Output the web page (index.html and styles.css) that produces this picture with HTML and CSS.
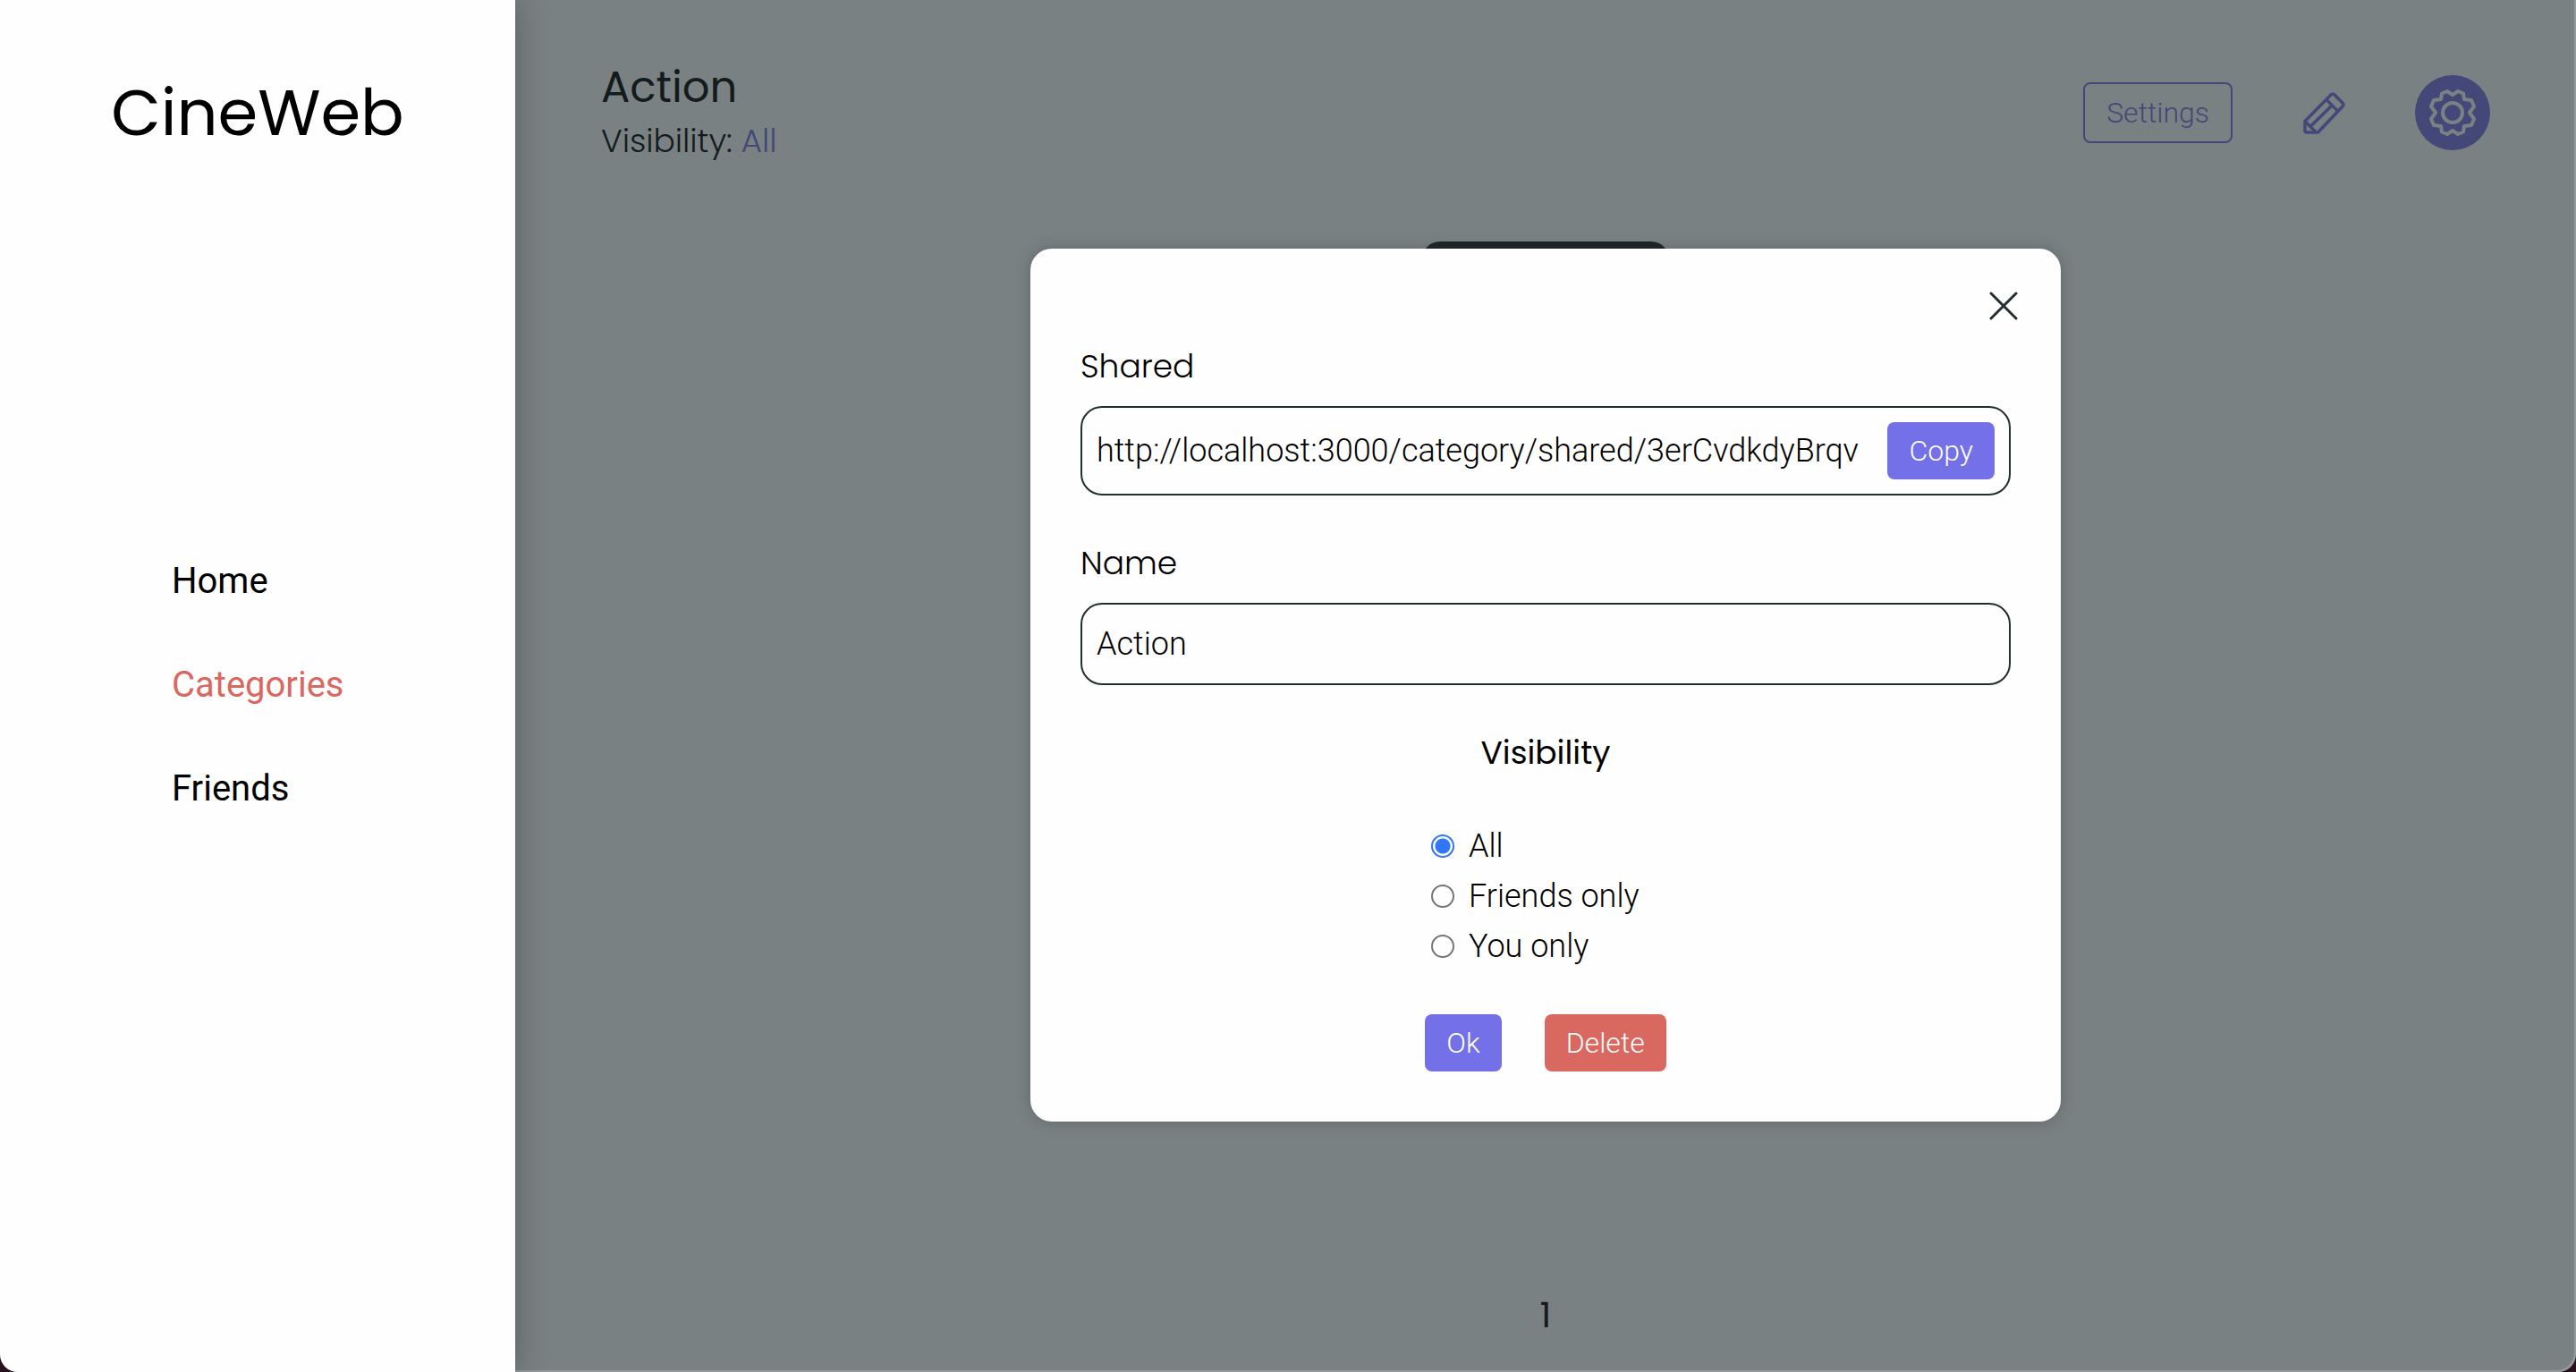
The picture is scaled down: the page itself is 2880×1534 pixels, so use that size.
FILE: index.html
```html
<!DOCTYPE html>
<html lang="en">
<head>
<meta charset="utf-8">
<title>CineWeb</title>
<link rel="stylesheet" href="styles.css">
</head>
<body>
<div class="app">
  <aside class="sidebar">
    <h1 class="logo">CineWeb</h1>
    <nav class="nav">
      <a class="nav-link" href="#home">Home</a>
      <a class="nav-link nav-link-active" href="#categories">Categories</a>
      <a class="nav-link" href="#friends">Friends</a>
    </nav>
  </aside>
  <main class="main">
    <header class="header">
      <div class="heading">
        <h2 class="title">Action</h2>
        <p class="subtitle">Visibility: <span class="accent">All</span></p>
      </div>
      <div class="actions">
        <button class="settings" type="button">Settings</button>
        <button class="icon-button" type="button" aria-label="Edit">
          <svg width="48" height="48" viewBox="0 0 48 48" fill="none" stroke="currentColor" stroke-width="3.500" stroke-linejoin="round">
            <path d="M3 33.500 32 4Q34 2 36 4L45 13Q47 15 45 17L17.500 46H5Q3 46 3 44ZM27 9.500 39.500 22M33 16 8.500 40M3 33.500 15.500 46"/>
          </svg>
        </button>
        <button class="icon-button round" type="button" aria-label="Options">
          <svg width="52" height="52" viewBox="-26 -26 52 52" fill="none" stroke="currentColor" stroke-width="4" stroke-linejoin="round">
            <circle r="11"/>
            <path d="M0-20 6-24 12-21.500 13-15 21-14 24-7 19 0 24 7 21 14 13 15 12 21.500 6 24 0 20-6 24-12 21.500-13 15-21 14-24 7-19 0-24-7-21-14-13-15-12-21.500-6-24Z"/>
          </svg>
        </button>
      </div>
    </header>
    <section class="content">
      <article class="poster"></article>
    </section>
    <footer class="pagination">1</footer>
    <form class="dialog" role="dialog" aria-label="Category settings">
      <button class="close" type="button" aria-label="Close">
        <svg width="32" height="32" viewBox="0 0 32 32" fill="none" stroke="currentColor" stroke-width="3" stroke-linecap="round"><path d="M2 2 30 30M30 2 2 30"/></svg>
      </button>
      <label class="label" for="shared">Shared</label>
      <div class="field field-shared">
        <input class="input" id="shared" type="text" value="http://localhost:3000/category/shared/3erCvdkdyBrqv" readonly>
        <button class="button" type="button">Copy</button>
      </div>
      <label class="label" for="name">Name</label>
      <div class="field field-name">
        <input class="input" id="name" type="text" value="Action">
      </div>
      <fieldset class="visibility">
        <legend class="legend">Visibility</legend>
        <label class="option"><input class="radio" type="radio" name="visibility" checked>All</label>
        <label class="option"><input class="radio" type="radio" name="visibility">Friends only</label>
        <label class="option"><input class="radio" type="radio" name="visibility">You only</label>
      </fieldset>
      <div class="buttons">
        <button class="button" type="submit">Ok</button>
        <button class="button button-danger" type="button">Delete</button>
      </div>
    </form>
  </main>
</div>
</body>
</html>
```
FILE: styles.css
```css
* { box-sizing: border-box; }

html { background: #2b1020; }

body {
  margin: 0;
  color: #000;
  font: 300 36px/56px Roboto, "Liberation Sans", sans-serif;
}

h1, h2, p, fieldset { margin: 0; padding: 0; border: 0; }

button, input { font: inherit; color: inherit; }

button {
  border: 0;
  padding: 0;
  background: none;
  cursor: pointer;
}

svg { display: block; }

.app {
  display: grid;
  grid-template-columns: 1fr 4fr;
  min-height: 100vh;
  overflow: hidden;
  border-radius: 0 0 20px 20px;
  background: #7a8182;
}

.sidebar {
  z-index: 1;
  display: flex;
  flex-direction: column;
  background: #fefefe;
  box-shadow: 0 0 32px rgba(35, 46, 48, 0.4);
}

.logo {
  padding-top: 76px;
  font: 400 72px/100px Poppins, Inter, sans-serif;
  text-align: center;
}

.nav {
  display: flex;
  flex-direction: column;
  gap: 60px;
  padding: 446px 0 0 192px;
}

.nav-link {
  color: #000;
  font-size: 40px;
  font-weight: 400;
  text-decoration: none;
}

.nav-link-active { color: #d96861; }

.main {
  position: relative;
  display: flex;
  flex-direction: column;
  border-radius: 0 0 20px 0;
  box-shadow: inset -2px -2px 0 #959999;
  color: #131b1c;
}

.header {
  display: flex;
  justify-content: space-between;
  align-items: center;
  padding: 66px 96px 0 96px;
}

.title { font: 400 48px/64px Poppins, Inter, sans-serif; }

.subtitle { font: 300 36px/56px Poppins, Inter, sans-serif; }

.accent { color: #444878; }

.actions {
  display: flex;
  align-items: center;
  gap: 78px;
  color: #444878;
}

.settings {
  height: 68px;
  padding: 0 24px;
  border: 2px solid;
  border-radius: 8px;
  font-size: 32px;
}

.round {
  display: grid;
  place-items: center;
  width: 84px;
  height: 84px;
  border-radius: 50%;
  background: #444878;
  color: #7a8182;
}

.content {
  flex: 1;
  display: flex;
  justify-content: center;
  align-items: flex-start;
  padding-top: 84px;
}

.poster {
  width: 276px;
  height: 400px;
  border-radius: 20px;
  background: #1e2526;
}

.pagination {
  padding-bottom: 34px;
  font: 400 40px/60px Poppins, Inter, sans-serif;
  text-align: center;
}

.dialog {
  position: absolute;
  top: 278px;
  left: 25%;
  width: 50%;
  display: flex;
  flex-direction: column;
  padding: 48px 56px 56px;
  border-radius: 24px;
  background: #fefefe;
  box-shadow: 0 0 16px rgba(35, 46, 48, 0.3);
  color: #000;
}

.close {
  align-self: flex-end;
  margin-right: -8px;
  color: #232e30;
}

.label {
  margin: 24px 0 16px;
  font: 300 36px/56px Poppins, Inter, sans-serif;
}

.field {
  display: flex;
  align-items: center;
  gap: 16px;
  padding: 0 16px;
  border: 2px solid #232e30;
  border-radius: 24px;
}

.field-shared { height: 100px; margin-bottom: 24px; }

.field-name { height: 92px; }

.input {
  flex: 1;
  min-width: 0;
  padding: 0;
  border: 0;
  outline: 0;
  background: none;
}

.button {
  height: 64px;
  padding: 0 24px;
  border-radius: 8px;
  background: #7471e8;
  color: #fff;
  font-size: 32px;
}

.button-danger { background: #d96861; }

.visibility {
  align-self: center;
  display: flex;
  flex-direction: column;
  width: 256px;
  margin-top: 48px;
}

.legend {
  width: 100%;
  margin-bottom: 48px;
  padding: 0;
  font: 400 36px/56px Poppins, Inter, sans-serif;
  text-align: center;
}

.option {
  display: flex;
  align-items: center;
  gap: 16px;
}

.radio {
  appearance: none;
  width: 26px;
  height: 26px;
  margin: 0;
  border: 2px solid #767676;
  border-radius: 50%;
}

.radio:checked {
  border-color: #2f77f6;
  background: radial-gradient(circle, #2f77f6 8px, transparent 9px);
}

.buttons {
  display: flex;
  justify-content: center;
  gap: 48px;
  margin-top: 48px;
}
```
